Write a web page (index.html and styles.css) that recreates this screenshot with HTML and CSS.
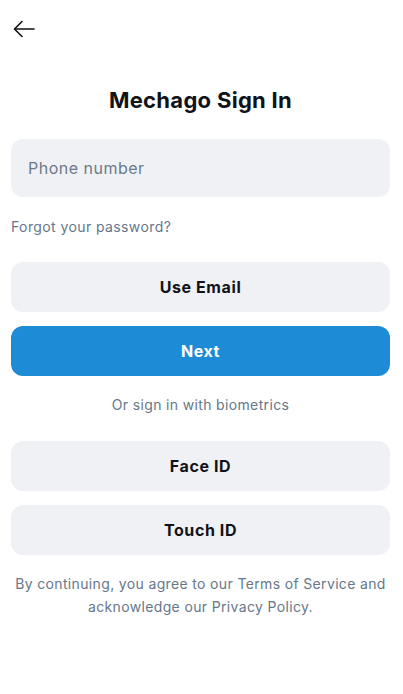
FILE: index.html
```html
<!DOCTYPE html>
<html lang="en">
<head>
<meta charset="utf-8">
<title>Mechago Sign In</title>
<link rel="stylesheet" href="styles.css">
</head>
<body>
<div class="screen">
  <header class="topbar">
    <button class="back" aria-label="Back">
      <svg width="22" height="18" viewBox="0 0 22 18" fill="none" stroke="#111" stroke-width="1.6" stroke-linecap="round" stroke-linejoin="round">
        <path d="M21 9H2"/>
        <path d="M9 1.5L1.5 9L9 16.5"/>
      </svg>
    </button>
  </header>
  <h1 class="title">Mechago Sign In</h1>
  <div class="field">Phone number</div>
  <a class="forgot">Forgot your password?</a>
  <button class="btn btn-light btn-first">Use Email</button>
  <button class="btn btn-primary">Next</button>
  <p class="muted center bio">Or sign in with biometrics</p>
  <button class="btn btn-light btn-face">Face ID</button>
  <button class="btn btn-light">Touch ID</button>
  <p class="muted center terms">By continuing, you agree to our Terms of Service and acknowledge our Privacy Policy.</p>
</div>
</body>
</html>
```

FILE: styles.css
```css
* { box-sizing: border-box; }
html, body { margin: 0; padding: 0; background: #fff; }
body {
  font-family: Inter, "Noto Sans", "Liberation Sans", sans-serif;
  color: #111318;
}
.screen {
  width: 403px;
  padding: 0 13px 0 11px;
  display: flex;
  flex-direction: column;
}
.topbar {
  height: 58px;
  display: flex;
  align-items: flex-start;
  padding-top: 20px;
}
.back {
  background: none;
  border: 0;
  padding: 0;
  margin-left: 2px;
  width: 22px;
  height: 18px;
  display: flex;
}
.title {
  margin: 28px 0 0;
  font-size: 22px;
  line-height: 28px;
  font-weight: 700;
  text-align: center;
  letter-spacing: 0.3px;
}
.field {
  margin-top: 25px;
  height: 58px;
  border-radius: 12px;
  background: #f0f1f5;
  padding: 0 17px;
  display: flex;
  align-items: center;
  font-size: 16px;
  letter-spacing: 0.5px;
  color: #6b7a8b;
}
.forgot {
  margin-top: 20px;
  font-size: 14px;
  line-height: 20px;
  letter-spacing: 0.4px;
  color: #66778a;
}
.btn {
  height: 50px;
  border: 0;
  border-radius: 12px;
  font-family: inherit;
  font-size: 16px;
  font-weight: 700;
  letter-spacing: 0.6px;
  margin-top: 14px;
  display: flex;
  align-items: center;
  justify-content: center;
}
.btn-light { background: #f0f1f5; color: #111318; }
.btn-primary { background: #1e8bd6; color: #fff; }
.btn-first { margin-top: 25px; }
.btn-face { margin-top: 26px; }
.muted { color: #66778a; font-size: 14px; letter-spacing: 0.35px; margin: 0; }
.center { text-align: center; }
.bio { margin-top: 19px; line-height: 20px; }
.terms { margin-top: 17px; line-height: 23px; padding: 0 1px; }
```
